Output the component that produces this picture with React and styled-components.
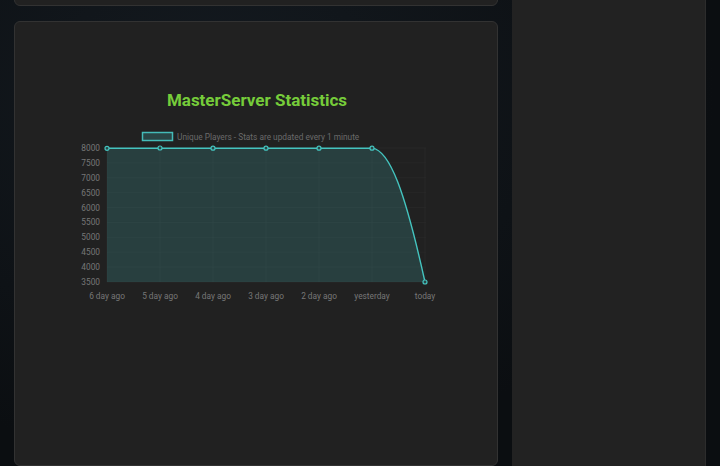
import React from "react";
import styled, { createGlobalStyle } from "styled-components";

const Global = createGlobalStyle`
  html,body{margin:0;padding:0;background:#0e1114;overflow:hidden;}
  body{font-family:Roboto,"Liberation Sans",sans-serif;}
`;
const Page = styled.div`
  width:720px;height:466px;display:flex;gap:14px;padding-left:14px;box-sizing:border-box;
  background:radial-gradient(ellipse at 30% 20%,#141a20,#0b0e11 70%);
`;
const Main = styled.div`width:484px;display:flex;flex-direction:column;gap:15px;margin-top:-20px;`;
const Card = styled.div`
  background:#212121;border:1px solid #323232;border-radius:6px;height:${p=>p.h}px;box-sizing:border-box;
`;
const Side = styled.div`width:193px;background:#222;border-right:1px solid #2c2c2c;height:466px;`;

const xs=[106,159,212,265,318,371,424];
const yOf=v=>148+(8000-v)/4500*134;
const ticks=[8000,7500,7000,6500,6000,5500,5000,4500,4000,3500];
const labels=["6 day ago","5 day ago","4 day ago","3 day ago","2 day ago","yesterday","today"];
const vals=[7990,8000,7995,7995,7995,7995,3500];

function Chart(){
  const pts=xs.map((x,i)=>[x-14,yOf(vals[i])-22]);
  const line=`M${pts[0][0]} ${pts[0][1]} L${pts[5][0]} ${pts[5][1]} C${pts[5][0]+18} ${pts[5][1]+2} ${pts[6][0]-20} ${pts[6][1]-90} ${pts[6][0]} ${pts[6][1]}`;
  const base=yOf(3500)-22;
  return (
    <svg width="482" height="330" style={{display:"block"}}>
      <text x="242" y="84" textAnchor="middle" fill="#76cc3a" fontSize="17" fontWeight="700" fontFamily="Roboto">MasterServer Statistics</text>
      <rect x="127.5" y="110.5" width="30" height="8" fill="#2a4646" stroke="#44bbb8" strokeWidth="1.5"/>
      <text x="162" y="117.5" fill="#6a6a6a" fontSize="8.3" fontFamily="Roboto">Unique Players - Stats are updated every 1 minute</text>
      {ticks.map(t=>(<g key={t}>
        <line x1="92" x2="411" y1={yOf(t)-22} y2={yOf(t)-22} stroke="#2b2b2b" strokeWidth="0.6"/>
        <text x="85" y={yOf(t)-22+3} textAnchor="end" fill="#777" fontSize="8.3" fontFamily="Roboto">{t}</text>
      </g>))}
      {xs.map((x,i)=>(<g key={i}>
        <line x1={x-14} x2={x-14} y1="126" y2={base} stroke="#2b2b2b" strokeWidth="0.6"/>
        <text x={x-14} y={base+17} textAnchor="middle" fill="#777" fontSize="8.3" fontFamily="Roboto">{labels[i]}</text>
      </g>))}
      <path d={`${line} L${pts[0][0]} ${base} Z`} fill="rgba(68,187,184,0.2)"/>
      <path d={line} fill="none" stroke="#44c4bf" strokeWidth="1.4"/>
      {pts.map((p,i)=><circle key={i} cx={p[0]} cy={p[1]} r="2" fill="#2a4646" stroke="#44c4bf" strokeWidth="1.2"/>)}
    </svg>
  );
}

export default function App(){
  return (<><Global/><Page>
    <Main>
      <Card h={28}/>
      <Card h={480}><Chart/></Card>
    </Main>
    <Side/>
  </Page></>);
}
